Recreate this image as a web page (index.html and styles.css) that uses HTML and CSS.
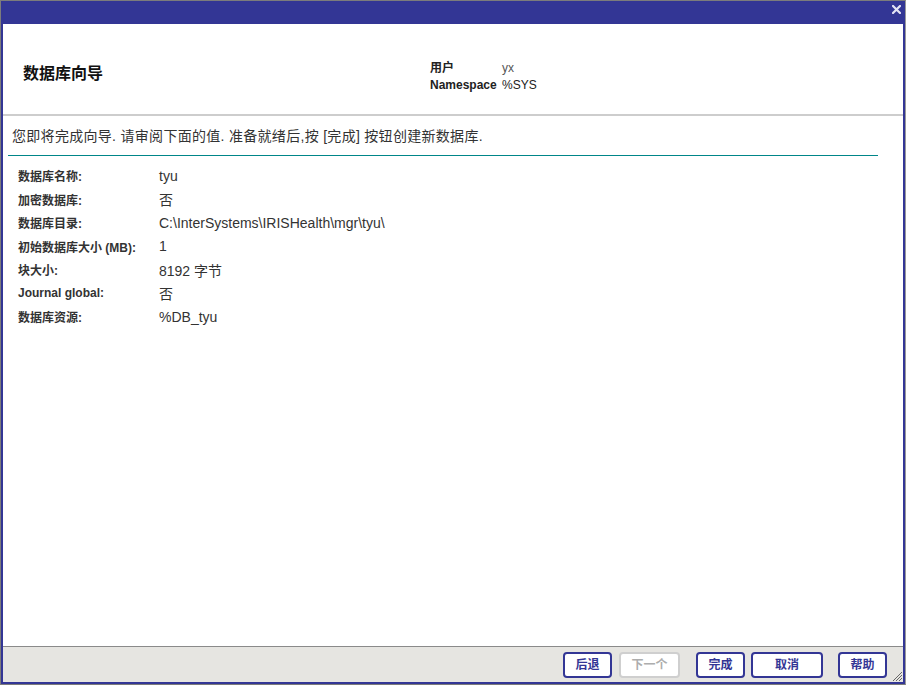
FILE: index.html
```html
<!DOCTYPE html>
<html lang="zh">
<head>
<meta charset="utf-8">
<title>数据库向导</title>
<link rel="stylesheet" href="styles.css">
</head>
<body>
<div class="window">
  <div class="titlebar">
    <span class="close">
      <svg width="9" height="9" viewBox="0 0 9 9"><path d="M1 1 L8 8 M8 1 L1 8" stroke="#e4e4f4" stroke-width="2.2" stroke-linecap="square"/></svg>
    </span>
  </div>
  <div class="content">
    <div class="header">
      <div class="title">数据库向导</div>
      <div class="info">
        <div class="info-row"><span class="info-label">用户</span><span class="info-value light">yx</span></div>
        <div class="info-row"><span class="info-label">Namespace</span><span class="info-value">%SYS</span></div>
      </div>
    </div>
    <div class="body">
      <div class="desc">您即将完成向导. 请审阅下面的值. 准备就绪后,按 [完成] 按钮创建新数据库.</div>
      <div class="rule"></div>
      <div class="rows">
        <div class="row"><span class="label">数据库名称:</span><span class="value">tyu</span></div>
        <div class="row"><span class="label">加密数据库:</span><span class="value">否</span></div>
        <div class="row"><span class="label">数据库目录:</span><span class="value">C:\InterSystems\IRISHealth\mgr\tyu\</span></div>
        <div class="row"><span class="label">初始数据库大小 (MB):</span><span class="value">1</span></div>
        <div class="row"><span class="label">块大小:</span><span class="value">8192 字节</span></div>
        <div class="row"><span class="label">Journal global:</span><span class="value">否</span></div>
        <div class="row"><span class="label">数据库资源:</span><span class="value">%DB_tyu</span></div>
      </div>
    </div>
    <div class="footer">
      <button class="btn w49">后退</button>
      <button class="btn w61 disabled">下一个</button>
      <button class="btn w49 gap">完成</button>
      <button class="btn w72 tight">取消</button>
      <button class="btn w49 gap2">帮助</button>
      <svg class="grip" width="11" height="11" viewBox="0 0 11 11">
        <path d="M10 1 L1 10 M10 4 L4 10 M10 7 L7 10" stroke="#666" stroke-width="1"/>
      </svg>
    </div>
  </div>
</div>
</body>
</html>
```
FILE: styles.css
```css
html, body {
  margin: 0;
  padding: 0;
  background: #ffffff;
}
body {
  font-family: "Liberation Sans", Arial, "Noto Sans CJK SC", sans-serif;
  color: #000;
}
.window {
  width: 906px;
  height: 685px;
  box-sizing: border-box;
  border: 1px solid #7c7c7c;
  border-right-color: #9a9a9a;
  background: #333695;
  padding: 0 2px 2px 2px;
  display: flex;
  flex-direction: column;
}
.titlebar {
  height: 23px;
  flex: none;
  display: flex;
  justify-content: flex-end;
  align-items: flex-start;
}
.close {
  width: 9px;
  height: 9px;
  margin: 4px 2px 0 0;
  display: block;
}
.close svg { display: block; }
.content {
  flex: 1;
  background: #ffffff;
  display: flex;
  flex-direction: column;
  min-height: 0;
}
.header {
  height: 90px;
  flex: none;
  border-bottom: 2px solid #cdcdcd;
  display: flex;
  align-items: flex-start;
}
.title {
  margin: 40px 0 0 20px;
  font-size: 16px;
  font-weight: bold;
  line-height: 20px;
  width: 407px;
  color: #111;
}
.info {
  margin-top: 36px;
  font-size: 12px;
}
.info-row {
  display: flex;
  height: 17px;
  line-height: 17px;
}
.info-label {
  width: 72px;
  font-weight: bold;
  color: #222;
}
.info-value {
  color: #222;
}
.info-value.light {
  color: #555;
}
.body {
  flex: 1;
  min-height: 0;
  padding: 0 0 0 9px;
}
.desc {
  margin-top: 11px;
  font-size: 14px;
  letter-spacing: 0.3px;
  line-height: 18px;
  color: #333;
}
.rule {
  width: 870px;
  height: 1px;
  background: #008689;
  margin: 10px 0 0 -4px;
}
.rows {
  margin-top: 8px;
  padding-left: 6px;
}
.row {
  display: flex;
  align-items: center;
  height: 23.5px;
}
.label {
  width: 141px;
  font-size: 12px;
  font-weight: bold;
  color: #333;
}
.value {
  font-size: 14px;
  color: #333;
}
.footer {
  position: relative;
  flex: none;
  border-top: 1px solid #8a8a8a;
  background: #e6e5e1;
  display: flex;
  justify-content: flex-end;
  align-items: flex-start;
  padding: 5px 16px 0 0;
  box-sizing: content-box;
  height: 30px;
}
.btn {
  height: 26px;
  box-sizing: border-box;
  border: 2px solid #333695;
  border-radius: 4px;
  background: #ffffff;
  color: #333695;
  font-family: "Liberation Sans", Arial, "Noto Sans CJK SC", sans-serif;
  font-size: 12px;
  font-weight: bold;
  padding: 0;
  margin-left: 7px;
  line-height: 20px;
}
.btn.gap { margin-left: 16px; }
.btn.tight { margin-left: 6px; }
.btn.gap2 { margin-left: 15px; }
.btn.w49 { width: 49px; }
.btn.w61 { width: 61px; }
.btn.w72 { width: 72px; }
.btn.disabled {
  border-color: #cfcfcf;
  color: #adadad;
}
.grip {
  position: absolute;
  right: 0;
  bottom: 0;
}
```
